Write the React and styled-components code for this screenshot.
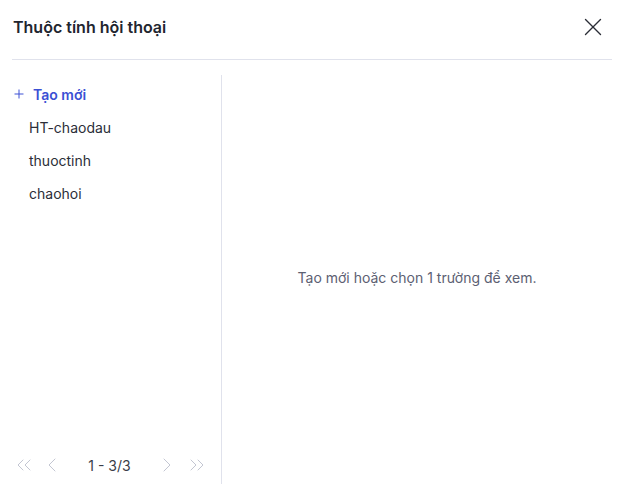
import React from "react";
import styled, { createGlobalStyle } from "styled-components";
import { X, Plus, ChevronLeft, ChevronRight, ChevronsLeft, ChevronsRight } from "lucide-react";

const GlobalStyle = createGlobalStyle`
  html, body {
    margin: 0;
    padding: 0;
    background: #ffffff;
    font-family: Inter, "Noto Sans", sans-serif;
  }
`;

const items = ["HT-chaodau", "thuoctinh", "chaohoi"];

export default function App() {
  return (
    <>
      <GlobalStyle />
      <Modal>
        <Header>
          <Title>Thuộc tính hội thoại</Title>
          <CloseButton aria-label="close">
            <X size={30} strokeWidth={1.1} />
          </CloseButton>
        </Header>
        <Body>
          <Sidebar>
            <List>
              <CreateRow>
                <Plus size={14} strokeWidth={1.7} />
                <span>Tạo mới</span>
              </CreateRow>
              {items.map((name) => (
                <Item key={name}>{name}</Item>
              ))}
            </List>
            <Pager>
              <PageIcon><ChevronsLeft size={24} strokeWidth={1} /></PageIcon>
              <PageIcon><ChevronLeft size={24} strokeWidth={1} /></PageIcon>
              <PageText>1 - 3/3</PageText>
              <PageIcon><ChevronRight size={24} strokeWidth={1} /></PageIcon>
              <PageIcon $last><ChevronsRight size={24} strokeWidth={1} /></PageIcon>
            </Pager>
          </Sidebar>
          <Content>
            <EmptyText>Tạo mới hoặc chọn 1 trường để xem.</EmptyText>
          </Content>
        </Body>
      </Modal>
    </>
  );
}

const Modal = styled.div`
  height: 484px;
  padding: 0 11px 0 12px;
  box-sizing: border-box;
  display: flex;
  flex-direction: column;
`;

const Header = styled.div`
  height: 60px;
  flex-shrink: 0;
  box-sizing: border-box;
  padding-bottom: 5px;
  display: flex;
  align-items: center;
  justify-content: space-between;
  border-bottom: 1px solid #e0e2ec;
`;

const Title = styled.h2`
  margin: 0;
  padding-left: 1px;
  font-size: 16px;
  font-weight: 600;
  color: #22252f;
`;

const CloseButton = styled.button`
  border: none;
  background: none;
  padding: 0;
  margin-right: 4px;
  display: flex;
  color: #2a2d36;
  cursor: pointer;
`;

const Body = styled.div`
  flex: 1;
  display: flex;
  padding-top: 15px;
  min-height: 0;
`;

const Sidebar = styled.div`
  width: 209px;
  border-right: 1px solid #e0e2ec;
  display: flex;
  flex-direction: column;
`;

const List = styled.div`
  flex: 1;
  padding-top: 2px;
`;

const CreateRow = styled.div`
  height: 34px;
  display: flex;
  align-items: center;
  gap: 7px;
  font-size: 14px;
  font-weight: 600;
  color: #3b50d4;
  cursor: pointer;
`;

const Item = styled.div`
  height: 33px;
  display: flex;
  align-items: center;
  padding-left: 17px;
  font-size: 14px;
  color: #2b2e38;
`;

const Pager = styled.div`
  height: 32px;
  margin-bottom: 3px;
  display: flex;
  align-items: center;
  gap: 4px;
`;

const PageIcon = styled.span`
  width: 24px;
  display: flex;
  justify-content: center;
  margin-left: ${(p) => (p.$last ? "1.5px" : "0")};
  color: #c3c6d2;
`;

const PageText = styled.span`
  width: 83px;
  text-align: center;
  font-size: 14px;
  color: #3a3d48;
`;

const Content = styled.div`
  flex: 1;
  display: flex;
  align-items: center;
  justify-content: center;
  padding-bottom: 4px;
`;

const EmptyText = styled.p`
  margin: 0;
  font-size: 14px;
  color: #5c6072;
`;
